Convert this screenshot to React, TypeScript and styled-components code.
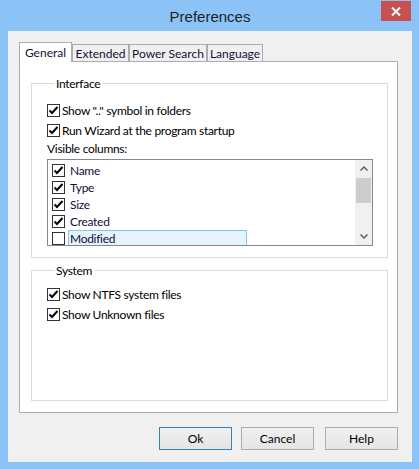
import React from "react";
import styled, { createGlobalStyle, css } from "styled-components";

const Global = createGlobalStyle`
  html, body { margin: 0; padding: 0; background: #8cc3f7; }
  body { font-family: Lato, "Liberation Sans", Arial, sans-serif; font-size: 12px; letter-spacing: -0.3px; color: #000; }
  * { box-sizing: border-box; }
`;

const Window = styled.div`
  width: 419px;
  height: 469px;
  background: #8cc3f7;
  display: flex;
  flex-direction: column;
  padding: 0 7px 7px 8px;
`;

const TitleBar = styled.div`
  height: 31px;
  flex: none;
  display: grid;
  grid-template-columns: 1fr auto 1fr;
  align-items: center;
`;

const Title = styled.div`
  grid-column: 2;
  font-family: "Liberation Sans", Arial, sans-serif;
  font-size: 15px;
  letter-spacing: 0;
  color: #1f1f1f;
  padding-top: 1px;
`;

const CloseButton = styled.div`
  grid-column: 3;
  justify-self: end;
  align-self: start;
  width: 30px;
  height: 20px;
  margin-top: 1px;
  margin-right: 1px;
  background: #c75050;
  display: flex;
  align-items: center;
  justify-content: center;
`;

const Client = styled.div`
  flex: 1;
  background: #f0f0f0;
  display: flex;
  flex-direction: column;
  padding: 11px 14px 12px 11px;
`;

const TabRow = styled.div`
  height: 19px;
  display: flex;
  align-items: flex-end;
  flex: none;
`;

const Tab = styled.div<{ $active?: boolean; $w: number }>`
  width: ${(p) => p.$w}px;
  height: 17px;
  border: 1px solid #acacac;
  border-bottom: none;
  background: #f0f0f0;
  color: #10103a;
  display: flex;
  align-items: center;
  justify-content: center;
  line-height: 15px;
  white-space: nowrap;
  letter-spacing: 0;
  ${(p) =>
    p.$active &&
    css`
      height: 20px;
      margin-bottom: -1px;
      background: #fff;
      position: relative;
      z-index: 1;
      padding-bottom: 1px;
    `}
`;

const Panel = styled.div`
  height: 352px;
  flex: none;
  background: #fff;
  border: 1px solid #adadad;
  display: flex;
  flex-direction: column;
  padding: 14px 9px 11px 11px;
`;

const Group = styled.fieldset<{ $grow?: boolean }>`
  margin: 0;
  border: 1px solid #dcdcdc;
  padding: 0 14px 11px 15px;
  min-width: 0;
  display: flex;
  flex-direction: column;
  ${(p) => p.$grow && css`flex: 1; margin-top: 5px;`}
`;

const Legend = styled.legend`
  margin-left: 7px;
  padding: 0 2px;
  line-height: 15px;
  font-size: 12px;
  color: #000;
`;

const Rows = styled.div<{ $top: number }>`
  padding-top: ${(p) => p.$top}px;
  display: flex;
  flex-direction: column;
`;

const CheckRow = styled.div`
  height: 20px;
  display: flex;
  align-items: center;
  gap: 2px;
`;

const Box = styled.span`
  width: 13px;
  height: 13px;
  border: 1px solid #333;
  background: #fff;
  flex: none;
  display: flex;
`;

const Caption = styled.div`
  height: 18px;
  line-height: 18px;
  margin-bottom: 1px;
`;

const List = styled.div`
  height: 87px;
  border: 1px solid #828790;
  display: flex;
  overflow: hidden;
  background: #fff;
`;

const Items = styled.div`
  flex: 1;
  padding: 2px 0 0 4px;
  display: flex;
  flex-direction: column;
`;

const Item = styled.div`
  height: 17px;
  flex: none;
  display: flex;
  align-items: center;
  gap: 3px;
  color: #10103a;
`;

const ItemLabel = styled.span<{ $sel?: boolean }>`
  width: 179px;
  height: 17px;
  line-height: 15px;
  padding-left: 1px;
  border: 1px solid ${(p) => (p.$sel ? "#84c6ef" : "transparent")};
  background: ${(p) => (p.$sel ? "#e5f3fb" : "transparent")};
`;

const ScrollBar = styled.div`
  width: 17px;
  flex: none;
  background: #f0f0f0;
  display: flex;
  flex-direction: column;
`;

const Arrow = styled.div`
  height: 17px;
  display: flex;
  align-items: center;
  justify-content: center;
  flex: none;
`;

const Track = styled.div`
  flex: 1;
  padding: 1px 1px 0 1px;
`;

const Thumb = styled.div`
  height: 25px;
  background: #cdcdcd;
`;

const ButtonRow = styled.div`
  margin-top: 14px;
  display: flex;
  justify-content: flex-end;
`;

const Button = styled.div<{ $def?: boolean; $gap: number }>`
  width: 73px;
  height: 23px;
  margin-left: ${(p) => p.$gap}px;
  border: 1px solid ${(p) => (p.$def ? "#3c7fb1" : "#acacac")};
  background: linear-gradient(#f0f0f0, #e5e5e5);
  display: flex;
  align-items: center;
  justify-content: center;
  color: #000;
  letter-spacing: 0;
`;

const Check = () => (
  <svg width="11" height="11" viewBox="0 0 11 11">
    <polyline points="1.5,5.5 4,8 9.5,2" fill="none" stroke="#000" strokeWidth="2" />
  </svg>
);

const CheckBox = ({ checked }: { checked?: boolean }) => <Box>{checked && <Check />}</Box>;

const Chevron = ({ up }: { up?: boolean }) => (
  <svg width="8" height="5" viewBox="0 0 8 5">
    <polyline
      points={up ? "0.5,4.5 4,1 7.5,4.5" : "0.5,0.5 4,4 7.5,0.5"}
      fill="none"
      stroke="#606060"
      strokeWidth="1.5"
    />
  </svg>
);

const columns = [
  { name: "Name", on: true },
  { name: "Type", on: true },
  { name: "Size", on: true },
  { name: "Created", on: true },
  { name: "Modified", on: false, sel: true },
];

export default function App() {
  return (
    <>
      <Global />
      <Window>
        <TitleBar>
          <Title>Preferences</Title>
          <CloseButton>
            <svg width="10" height="9" viewBox="0 0 10 9">
              <path d="M1 0.5 L9 8.5 M9 0.5 L1 8.5" stroke="#fff" strokeWidth="2" />
            </svg>
          </CloseButton>
        </TitleBar>
        <Client>
          <TabRow>
            <Tab $active $w={53}>General</Tab>
            <Tab $w={57}>Extended</Tab>
            <Tab $w={78}>Power Search</Tab>
            <Tab $w={56}>Language</Tab>
          </TabRow>
          <Panel>
            <Group>
              <Legend>Interface</Legend>
              <Rows $top={9}>
                <CheckRow>
                  <CheckBox checked />
                  <span>Show ".." symbol in folders</span>
                </CheckRow>
                <CheckRow>
                  <CheckBox checked />
                  <span>Run Wizard at the program startup</span>
                </CheckRow>
                <Caption>Visible columns:</Caption>
                <List>
                  <Items>
                    {columns.map((c) => (
                      <Item key={c.name}>
                        <CheckBox checked={c.on} />
                        <ItemLabel $sel={c.sel}>{c.name}</ItemLabel>
                      </Item>
                    ))}
                  </Items>
                  <ScrollBar>
                    <Arrow>
                      <Chevron up />
                    </Arrow>
                    <Track>
                      <Thumb />
                    </Track>
                    <Arrow>
                      <Chevron />
                    </Arrow>
                  </ScrollBar>
                </List>
              </Rows>
            </Group>
            <Group $grow>
              <Legend>System</Legend>
              <Rows $top={6}>
                <CheckRow>
                  <CheckBox checked />
                  <span>Show NTFS system files</span>
                </CheckRow>
                <CheckRow>
                  <CheckBox checked />
                  <span>Show Unknown files</span>
                </CheckRow>
              </Rows>
            </Group>
          </Panel>
          <ButtonRow>
            <Button $def $gap={0}>Ok</Button>
            <Button $gap={9}>Cancel</Button>
            <Button $gap={11}>Help</Button>
          </ButtonRow>
        </Client>
      </Window>
    </>
  );
}
